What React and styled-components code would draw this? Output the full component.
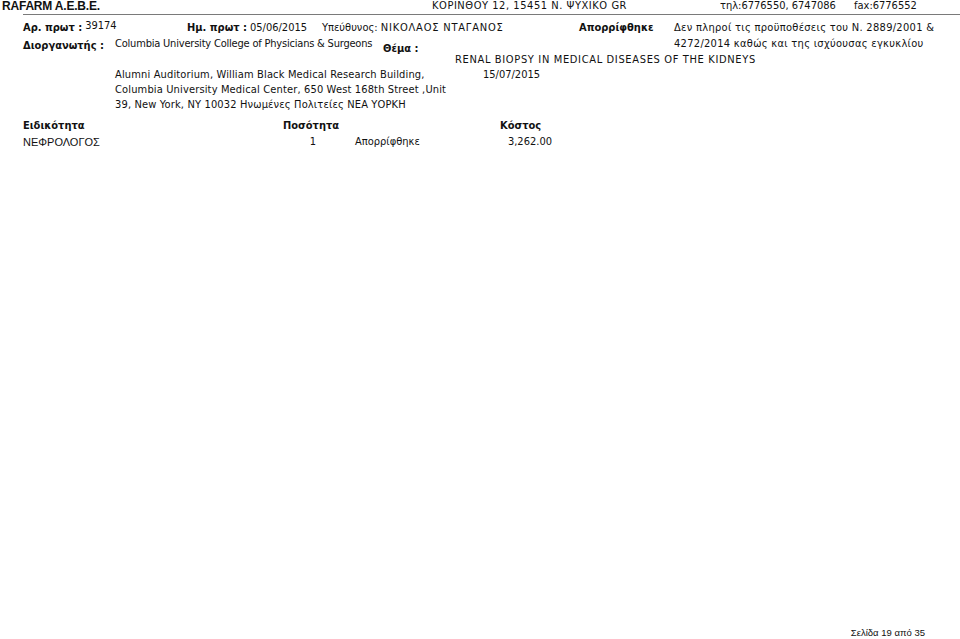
import React from 'react'
import styled, {createGlobalStyle} from 'styled-components'

const record = {
  protocol: '39174',
  date: '05/06/2015',
  person: 'ΝΙΚΟΛΑΟΣ ΝΤΑΓΑΝΟΣ',
  status: 'Απορρίφθηκε',
  reason: ['Δεν πληροί τις προϋποθέσεις του Ν. 2889/2001 &', '4272/2014 καθώς και της ισχύουσας εγκυκλίου'],
  organizer: 'Columbia University College of Physicians & Surgeons',
  subject: 'RENAL BIOPSY IN MEDICAL DISEASES OF THE KIDNEYS',
  address: [
    'Alumni Auditorium, William Black Medical Research Building,',
    'Columbia University Medical Center, 650 West 168th Street ,Unit',
    '39, New York, NY 10032 Ηνωμένες Πολιτείες ΝΕΑ ΥΟΡΚΗ',
  ],
  eventDate: '15/07/2015',
}

const lines = [
  {specialty: 'ΝΕΦΡΟΛΟΓΟΣ', qty: 1, status: 'Απορρίφθηκε', cost: '3,262.00'},
]

const App = () => {
  return (
    <Page>
      <Global />
      <Header>
        <Brand>RAFARM A.E.B.E.</Brand>
        <Address>ΚΟΡΙΝΘΟΥ 12, 15451 Ν. ΨΥΧΙΚΟ GR</Address>
        <Phone>τηλ:6776550, 6747086</Phone>
        <Fax>fax:6776552</Fax>
      </Header>
      <Rule />

      <Record>
        <Cell col="1 / 3" row="1">
          <Label>Αρ. πρωτ :</Label><Raised>{record.protocol}</Raised>
        </Cell>
        <Cell col="3 / 4" row="1">
          <Label>Ημ. πρωτ :</Label>{record.date}
        </Cell>
        <Cell col="4 / 8" row="1">Υπεύθυνος: <Caps>{record.person}</Caps></Cell>
        <Cell col="8 / 9" row="1"><Label>{record.status}</Label></Cell>
        <Reason>
          {record.reason.map((t) => <div key={t}>{t}</div>)}
        </Reason>

        <Cell col="1 / 2" row="2" shift={2}><Label>Διοργανωτής :</Label></Cell>
        <Organizer>{record.organizer}</Organizer>
        <Cell col="5 / 7" row="2" shift={5}><Label>Θέμα :</Label></Cell>

        <Subject>{record.subject}</Subject>

        <Venue>
          {record.address.map((t) => <div key={t}>{t}</div>)}
        </Venue>
        <Cell col="7 / 8" row="4" shift={1}>{record.eventDate}</Cell>
      </Record>

      <Table>
        <Head>Ειδικότητα</Head>
        <Head>Ποσότητα</Head>
        <Head />
        <Head>Κόστος</Head>
        {lines.map((l) => (
          <React.Fragment key={l.specialty}>
            <Specialty>{l.specialty}</Specialty>
            <Data align="center">{l.qty}</Data>
            <Data pad={12}>{l.status}</Data>
            <Data align="right">{l.cost}</Data>
          </React.Fragment>
        ))}
      </Table>

      <Footer>Σελίδα 19 από 35</Footer>
    </Page>
  )
}

export default App

const Global = createGlobalStyle`
body{
  margin:0;
  background:#fff;
  color:#000;
  font-family:"DejaVu Sans", Verdana, sans-serif;
}
`
const Page = styled.div`
width:960px;
height:639px;
display:flex;
flex-direction:column;
overflow:hidden;
font-family:"DejaVu Sans Condensed","DejaVu Sans",sans-serif;
font-stretch:condensed;
font-size:11px;
color:#111;
`
const Header = styled.div`
display:grid;
grid-template-columns:430px 288px 134px 1fr;
height:12px;
line-height:12px;
padding-left:2px;
`
const Brand = styled.div`
font-family:"Liberation Sans",Arial,sans-serif;
font-weight:bold;
font-size:12px;
letter-spacing:-0.2px;
`
const Address = styled.div`
letter-spacing:0.55px;
`
const Phone = styled.div``
const Fax = styled.div``
const Rule = styled.div`
margin:2px 0 0 23px;
height:0;
border-top:1.5px solid #7a7a7a;
`
const Record = styled.div`
display:grid;
margin-top:5px;
padding-left:23px;
grid-template-columns:92px 72px 135px 61px 72px 28px 96px 95px 1fr;
grid-template-rows:16px 16px 14px 46px;
line-height:16px;
white-space:nowrap;
`
const Cell = styled.div`
grid-column:${(p) => p.col};
grid-row:${(p) => p.row};
padding-top:${(p) => p.shift || 0}px;
`
const Label = styled.span`
font-weight:bold;
margin-right:3px;
`
const Caps = styled.span`
letter-spacing:0.8px;
`
const Raised = styled.span`
position:relative;
top:-2px;
`
const Reason = styled.div`
grid-column:9 / 10;
grid-row:1 / 3;
letter-spacing:0.3px;
`
const Organizer = styled.div`
grid-column:2 / 5;
grid-row:2;
letter-spacing:-0.2px;
`
const Subject = styled.div`
grid-column:6 / 10;
grid-row:3;
letter-spacing:0.65px;
`
const Venue = styled.div`
grid-column:2 / 7;
grid-row:4;
line-height:15px;
padding-top:1px;
letter-spacing:0.15px;
`
const Table = styled.div`
display:grid;
grid-template-columns:260px 60px 157px 52px;
grid-auto-rows:16px;
line-height:16px;
padding-left:23px;
margin-top:6px;
`
const Head = styled.div`
font-weight:bold;
`
const Data = styled.div`
text-align:${(p) => p.align || 'left'};
padding-left:${(p) => p.pad || 0}px;
`
const Specialty = styled.div`
font-family:"Liberation Sans",Arial,sans-serif;
font-size:11px;
`
const Footer = styled.div`
margin-top:auto;
align-self:flex-end;
padding:0 35px 1px 0;
font-family:"Liberation Sans",Arial,sans-serif;
font-size:9.5px;
line-height:11px;
`
